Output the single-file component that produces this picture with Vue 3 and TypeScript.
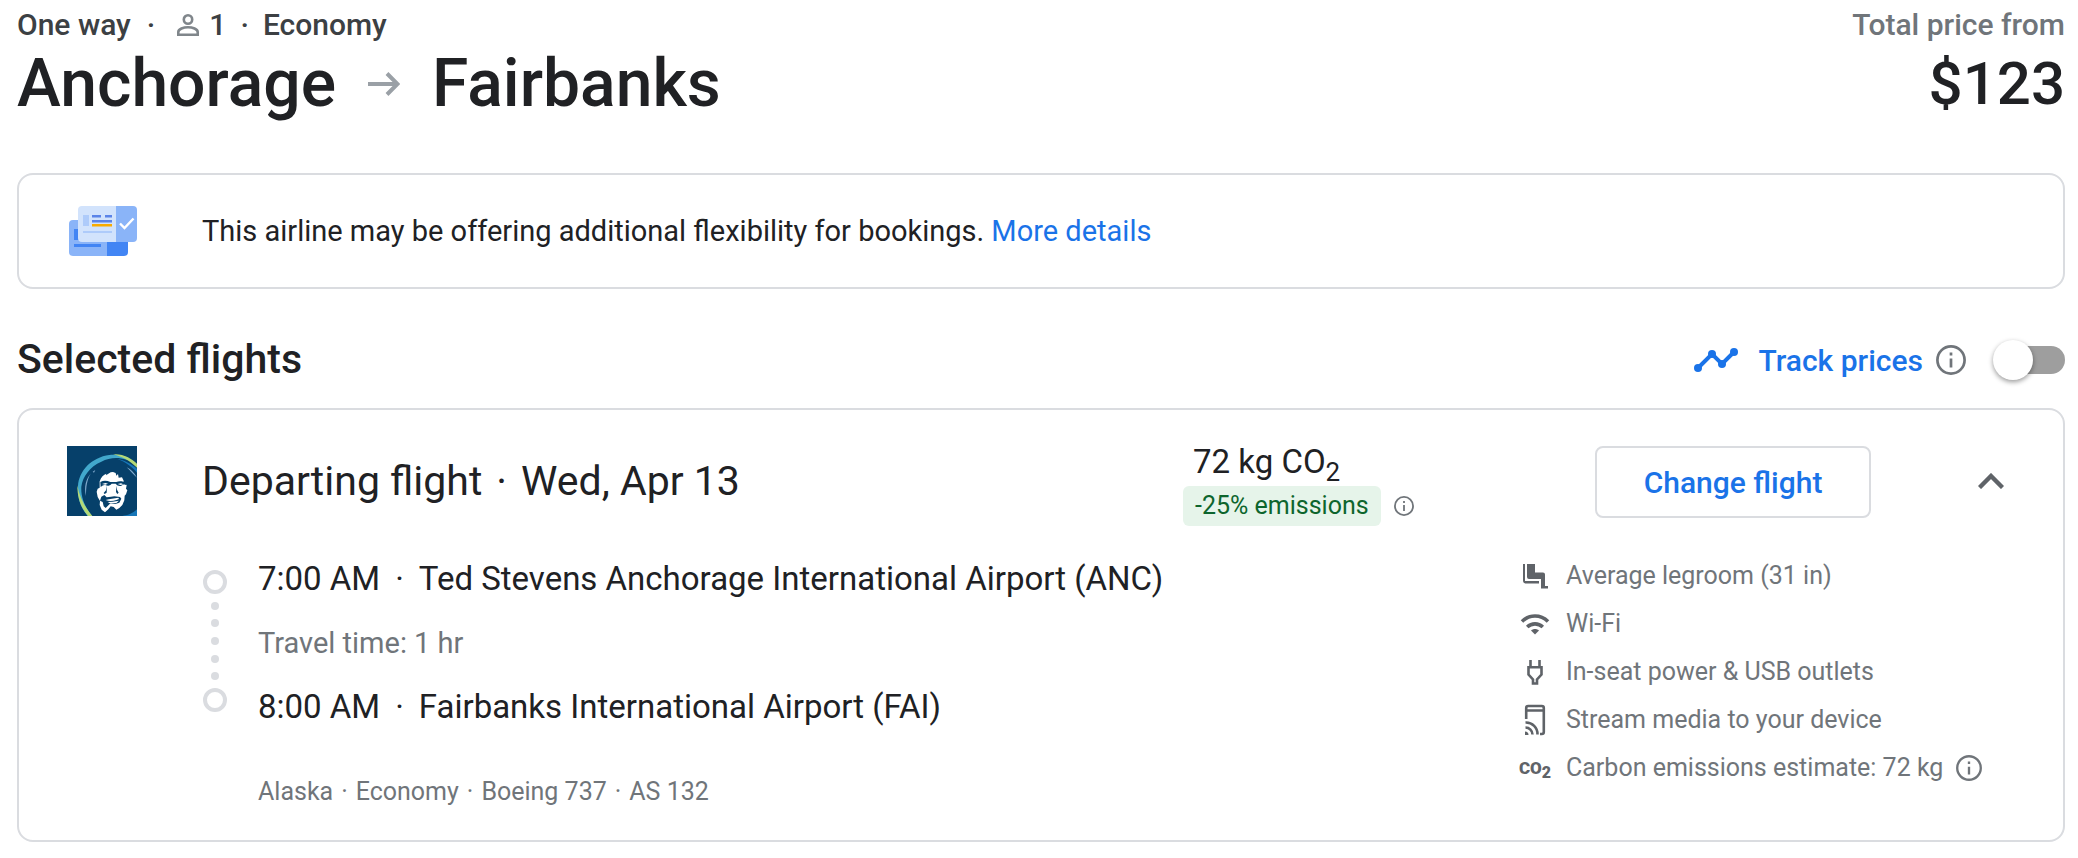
<script setup lang="ts">
import { ref } from 'vue'

type AmenityIcon = 'legroom' | 'wifi' | 'power' | 'stream' | 'co2'

interface Amenity {
  icon: AmenityIcon
  text: string
  info?: boolean
}

const tracking = ref(false)
const expanded = ref(true)

const amenities: Amenity[] = [
  { icon: 'legroom', text: 'Average legroom (31 in)' },
  { icon: 'wifi', text: 'Wi-Fi' },
  { icon: 'power', text: 'In-seat power & USB outlets' },
  { icon: 'stream', text: 'Stream media to your device' },
  { icon: 'co2', text: 'Carbon emissions estimate: 72 kg', info: true },
]

const legDetails: string[] = ['Alaska', 'Economy', 'Boeing 737', 'AS 132']
const timelineDots: number[] = [36, 53, 71, 89, 106]
</script>

<template>
  <main class="page">
    <header class="trip">
      <div class="trip-main">
        <div class="trip-meta">
          <span>One way</span>
          <span>·</span>
          <span class="passengers">
            <svg class="person" viewBox="0 0 22 22" aria-hidden="true">
              <circle cx="11" cy="5.5" r="4.2" />
              <path d="M1.3 20.7v-2.6c0-3 5.200-4.900 9.700-4.900s9.700 1.900 9.700 4.900v2.600z" />
            </svg>
            <span>1</span>
          </span>
          <span>·</span>
          <span>Economy</span>
        </div>
        <h1 class="route">
          <span>Anchorage</span>
          <svg class="arrow" viewBox="0 0 32 24" aria-label="to">
            <path d="M0 12h29M19 1.500L29.500 12 19 22.500" />
          </svg>
          <span>Fairbanks</span>
        </h1>
      </div>
      <div class="trip-price">
        <div class="price-label">Total price from</div>
        <div class="price">$123</div>
      </div>
    </header>

    <section class="card notice">
      <svg class="tickets" viewBox="0 0 68 50" aria-hidden="true">
        <path d="M4 14h34v36H4a4 4 0 0 1-4-4V18a4 4 0 0 1 4-4z" fill="#8ab4f8" />
        <path d="M38 30h21v16a4 4 0 0 1-4 4H38z" fill="#4285f4" />
        <path d="M5 23h5v11H5zM5 38h27v3H5z" fill="#4285f4" />
        <path d="M13 0h34v36H13a4 4 0 0 1-4-4V4a4 4 0 0 1 4-4z" fill="#d2e3fc" />
        <path d="M47 0h17a4 4 0 0 1 4 4v28a4 4 0 0 1-4 4H47z" fill="#8ab4f8" />
        <path d="M14 9h6v11h-6zM14 25h29v2H14z" fill="#aecbfa" />
        <path d="M23 9h9v2.500h-9zM36 9h7v2.500h-7zM23 14h20v2.500H23z" fill="#5b84e8" />
        <path d="M23 18h20v2.500H23z" fill="#f9ab00" />
        <path d="M51 17.500l4.500 4.500 9-9.500" fill="none" stroke="#fff" stroke-width="2.400" />
      </svg>
      <p class="notice-text">
        This airline may be offering additional flexibility for bookings.
        <a href="#details">More details</a>
      </p>
    </section>

    <div class="section-head">
      <h2 class="section-title">Selected flights</h2>
      <div class="track">
        <svg class="trend" viewBox="0 0 44 24" aria-hidden="true">
          <path d="M4 20L18 6l10 10L40 4" />
          <circle cx="4" cy="20" r="4" /><circle cx="18" cy="6" r="4" />
          <circle cx="28" cy="16" r="4" /><circle cx="40" cy="4" r="4" />
        </svg>
        <label class="track-label" for="track-toggle">Track prices</label>
        <button class="info info-large" type="button" aria-label="About price tracking">
          <svg viewBox="0 0 30 30" aria-hidden="true">
            <circle cx="15" cy="15" r="13.600" />
            <path d="M15 13.500v9M15 7.500v3" />
          </svg>
        </button>
        <input id="track-toggle" v-model="tracking" class="toggle" type="checkbox" role="switch" />
      </div>
    </div>

    <section class="card flight">
      <div class="flight-head">
        <svg class="airline" viewBox="0 0 210 210" role="img" aria-label="Alaska Airlines">
          <rect width="210" height="210" fill="#06406a" />
          <path d="M62 210C40 184 31 158 33 120 36 74 74 34 127 27c22-2 44 2 60 10l-8 4c-28-8-52-6-76 6C68 62 47 92 43 122c-2 34 12 62 32 88z" fill="#42a8cc" />
          <path d="M31 118c0 38 10 66 32 92h13C54 184 38 156 31 118zM138 25c30-3 53 11 72 28v12c-22-20-42-33-72-40z" fill="#b4d977" />
          <path d="M72 82c-15 17-22 40-15 68 0-27 3-50 15-68zM179 64c14 6 23 17 31 31-11-8-19-20-31-31zM77 77l8-5-4 8z" fill="#7fa9cd" />
          <path d="M150 38c23 5 42 14 60 30v12c-16-20-36-33-60-42z" fill="#1676b8" />
          <path d="M210 190v20h-44c15-2 31-7 44-20z" fill="#1676b8" />
          <path d="M98 106c4-13 12-20 20-23l-1 5 14-9 7-1 8 3 2 8 5-5 2 11 10-1 5 10-1 8 10 5-2 11 4 5-4 12-4 4-1 14-6 14-9 9-9 5-8-8-9-2-7 9-10 9-10-8-6-14 1-12-7-12-3-16 3-9 6-3z" fill="#fff" />
          <path d="M100 108c10-5 20-4 30 0h18c10-4 20-2 31 3l-2 6c-6-3-9-1-14 2-6 2-12 0-17-6h-12c-6 7-13 8-19 4-5-1-9 2-14 6z" fill="#06406a" />
          <path d="M105 114l10-3 8 2-8 3zM152 114l10-2 7 3-8 2z" fill="#fff" />
          <path d="M120 119l-3 14-7 8 3 3 6-4zM148 119l2 12 5 9-4 4-4-6z" fill="#06406a" />
          <path d="M103 152l9-5 7 7 13-2 10-1 17 2 4 5-6 12-12 4h-17l-12 12-6-5-3-13-8-4z" fill="#06406a" />
          <path d="M116 162c13-4 25-5 38-7l2 4-8 3c-10 3-22 4-32 0zM122 168l15-1 19-3-8 7-17 2z" fill="#fff" />
        </svg>
        <h3 class="flight-title">
          <span>Departing flight</span>
          <span>·</span>
          <span>Wed, Apr 13</span>
        </h3>
        <div class="emissions">
          <div class="co2">72 kg CO<sub>2</sub></div>
          <div class="badge-row">
            <span class="badge">-25% emissions</span>
            <button class="info info-small" type="button" aria-label="About emissions">
              <svg viewBox="0 0 30 30" aria-hidden="true">
                <circle cx="15" cy="15" r="13.600" />
                <path d="M15 13.500v9M15 7.500v3" />
              </svg>
            </button>
          </div>
        </div>
        <button class="change" type="button">Change flight</button>
        <button class="collapse" type="button" aria-label="Flight details" :aria-expanded="expanded" @click="expanded = !expanded">
          <svg viewBox="0 0 26 16" aria-hidden="true">
            <path d="M1.500 14.500L13 3l11.500 11.500" />
          </svg>
        </button>
      </div>

      <div v-if="expanded" class="flight-body">
        <svg class="timeline" viewBox="0 0 24 142" aria-hidden="true">
          <circle class="stop" cx="12" cy="12" r="10" />
          <circle v-for="y in timelineDots" :key="y" class="dot" cx="12" :cy="y" r="4" />
          <circle class="stop" cx="12" cy="130" r="10" />
        </svg>
        <div class="itinerary">
          <div class="stop-row">
            <span>7:00 AM</span>
            <span>·</span>
            <span>Ted Stevens Anchorage International Airport (ANC)</span>
          </div>
          <div class="travel">Travel time: 1 hr</div>
          <div class="stop-row">
            <span>8:00 AM</span>
            <span>·</span>
            <span>Fairbanks International Airport (FAI)</span>
          </div>
          <div class="leg">
            <template v-for="(detail, i) in legDetails" :key="detail">
              <span v-if="i > 0">·</span>
              <span>{{ detail }}</span>
            </template>
          </div>
        </div>
        <ul class="amenities">
          <li v-for="item in amenities" :key="item.icon" class="amenity">
            <span v-if="item.icon === 'co2'" class="co2-mark" aria-hidden="true">CO<sub>2</sub></span>
            <svg v-else class="amenity-icon" viewBox="0 0 36 36" aria-hidden="true">
              <g v-if="item.icon === 'legroom'" class="solid">
                <path d="M6 6h2v17h14v2.500H9a3 3 0 0 1-3-3z" />
                <path d="M10 6h8v8.500h8a2 2 0 0 1 2 2V28h3v2.500h-7V21H12a2 2 0 0 1-2-2z" />
              </g>
              <g v-else-if="item.icon === 'wifi'">
                <path class="line wide" d="M5 15.500c7.500-7.300 18.500-7.300 26 0M10.200 21c4.500-4.200 11.100-4.200 15.600 0" />
                <path class="solid" d="M14 24.500c2.300-2 5.700-2 8 0l-4 4z" />
              </g>
              <g v-else-if="item.icon === 'power'">
                <path class="line" d="M13.500 6v6M22.500 6v6M11.500 13.200h13v7.300l-4.500 5v4h-4v-4l-4.500-5z" />
              </g>
              <g v-else>
                <path class="line" d="M9.200 17V6a2 2 0 0 1 2-2h13.600a2 2 0 0 1 2 2v24a2 2 0 0 1-2 2H23M9.200 8.500h17.600" />
                <path class="line" d="M8.500 20.500A11.500 11.500 0 0 1 20.500 32.500M8.500 25.500A7 7 0 0 1 15.500 32.500" />
                <path class="solid" d="M8 29.500a3.500 3.500 0 0 1 3.500 3.500H8z" />
              </g>
            </svg>
            <span>{{ item.text }}</span>
            <button v-if="item.info" class="info info-medium" type="button" aria-label="About carbon emissions">
              <svg viewBox="0 0 30 30" aria-hidden="true">
                <circle cx="15" cy="15" r="13.600" />
                <path d="M15 13.500v9M15 7.500v3" />
              </svg>
            </button>
          </li>
        </ul>
      </div>
    </section>
  </main>
</template>

<style>
body {
  margin: 0;
  background: #fff;
}
</style>

<style scoped>
.page {
  padding: 5px 13px 14px 17px;
  color: #202124;
  font-family: Roboto, "Liberation Sans", sans-serif;
}

h1,
h2,
h3,
p,
ul {
  margin: 0;
  padding: 0;
  font-weight: 400;
}

button {
  padding: 0;
  border: 0;
  background: none;
  font: inherit;
  cursor: pointer;
}

svg {
  display: block;
  flex: none;
}

.trip {
  display: flex;
  justify-content: space-between;
  margin-bottom: 50px;
  white-space: nowrap;
}

.trip-meta,
.price-label {
  line-height: 40px;
  font-size: 30px;
  font-weight: 500;
}

.trip-meta {
  display: flex;
  gap: 16px;
  color: #3c4043;
}

.passengers {
  display: flex;
  align-items: center;
  gap: 10px;
  padding-left: 6px;
}

.person {
  width: 22px;
  height: 22px;
  fill: none;
  stroke: #80868b;
  stroke-width: 2.6;
}

.trip-meta > span:nth-child(n + 4) {
  margin-left: -2px;
}

.route {
  display: flex;
  align-items: center;
  gap: 32px;
}

.route,
.price {
  line-height: 78px;
  font-size: 66px;
  font-weight: 500;
}

.price {
  font-size: 60px;
}

.arrow {
  width: 32px;
  height: 24px;
  fill: none;
  stroke: #9aa0a6;
  stroke-width: 4;
}

.trip-price {
  text-align: right;
}

.price-label {
  color: #70757a;
}

.card {
  border: 2px solid #dadce0;
  border-radius: 16px;
}

.notice {
  display: flex;
  align-items: center;
  gap: 65px;
  min-height: 112px;
  padding: 0 50px;
}

.tickets {
  width: 68px;
  height: 50px;
}

.notice-text {
  line-height: 40px;
  font-size: 29px;
}

.notice-text a {
  color: #1a73e8;
  text-decoration: none;
}

.section-head {
  display: flex;
  align-items: center;
  justify-content: space-between;
  min-height: 56px;
  margin: 43px 0 20px;
}

.section-title {
  padding-bottom: 2px;
  line-height: 54px;
  font-size: 41px;
  font-weight: 500;
}

.track {
  display: flex;
  align-items: center;
}

.trend {
  width: 44px;
  height: 24px;
  margin-right: 20px;
  fill: #1a73e8;
}

.trend path {
  fill: none;
  stroke: #1a73e8;
  stroke-width: 4;
}

.track-label {
  margin-right: 13px;
  color: #1a73e8;
  font-size: 30px;
  font-weight: 500;
}

.info svg {
  width: 100%;
  height: 100%;
  fill: none;
  stroke: #70757a;
  stroke-width: 2.7;
}

.info-large {
  width: 30px;
  height: 30px;
}

.info-medium {
  width: 26px;
  height: 26px;
}

.info-small {
  width: 20px;
  height: 20px;
}

.toggle {
  position: relative;
  appearance: none;
  width: 72px;
  height: 40px;
  margin: 0 0 0 27px;
  cursor: pointer;
}

.toggle::before {
  content: "";
  position: absolute;
  inset: 6px 0 6px 4px;
  border-radius: 14px;
  background: #9e9e9e;
}

.toggle::after {
  content: "";
  position: absolute;
  top: 0;
  left: 0;
  width: 40px;
  height: 40px;
  border-radius: 50%;
  background: #fff;
  box-shadow: 0 2px 5px rgba(0, 0, 0, 0.4);
}

.toggle:checked::before {
  background: #8ab4f8;
}

.toggle:checked::after {
  left: 32px;
  background: #1a73e8;
}

.flight {
  padding: 36px 48px 32px;
}

.flight-head {
  display: grid;
  grid-template-columns: 135px minmax(0, 1fr) 412px 276px 144px;
  align-items: start;
}

.airline {
  width: 70px;
  height: 70px;
}

.flight-title {
  display: flex;
  gap: 14px;
  line-height: 70px;
  font-size: 41px;
}

.co2 {
  padding-left: 10px;
  line-height: 32px;
  font-size: 33px;
}

.co2 sub {
  line-height: 0;
  font-size: 26px;
}

.badge-row {
  display: flex;
  align-items: center;
  gap: 13px;
  margin-top: 8px;
}

.badge {
  padding: 0 12px;
  border-radius: 6px;
  background: #e6f4ea;
  color: #0d652d;
  line-height: 40px;
  font-size: 25px;
}

.change {
  height: 72px;
  border: 2px solid #dadce0;
  border-radius: 8px;
  color: #1a73e8;
  font-size: 30px;
  font-weight: 500;
}

.collapse {
  display: flex;
  align-items: center;
  justify-content: center;
  justify-self: end;
  width: 48px;
  height: 70px;
}

.collapse svg {
  width: 26px;
  height: 16px;
  fill: none;
  stroke: #5f6368;
  stroke-width: 4.400;
}

.flight-body {
  display: grid;
  grid-template-columns: 55px minmax(0, 1fr) 498px;
  margin-top: 26px;
  padding-left: 136px;
}

.timeline {
  width: 24px;
  height: 142px;
  margin-top: 18px;
}

.stop {
  fill: none;
  stroke: #dadce0;
  stroke-width: 4;
}

.dot {
  fill: #dadce0;
}

.itinerary {
  padding-top: 7px;
}

.stop-row {
  display: flex;
  gap: 15px;
  line-height: 40px;
  font-size: 33px;
}

.travel {
  margin: 24px 0;
  color: #70757a;
  line-height: 40px;
  font-size: 29px;
}

.leg {
  display: flex;
  gap: 8px;
  margin-top: 49px;
  color: #70757a;
  line-height: 32px;
  font-size: 25px;
}

.amenities {
  list-style: none;
}

.amenity {
  display: flex;
  align-items: center;
  gap: 13px;
  color: #70757a;
  line-height: 48px;
  font-size: 25px;
  white-space: nowrap;
}

.amenity-icon {
  width: 36px;
  height: 36px;
}

.solid {
  fill: #5f6368;
}

.line {
  fill: none;
  stroke: #5f6368;
  stroke-width: 2.600;
}

.wide {
  stroke-width: 3.600;
}

.co2-mark {
  width: 36px;
  color: #5f6368;
  text-align: center;
  font-size: 17px;
  font-weight: 900;
}

.co2-mark sub {
  line-height: 0;
  font-size: 16px;
}
</style>
